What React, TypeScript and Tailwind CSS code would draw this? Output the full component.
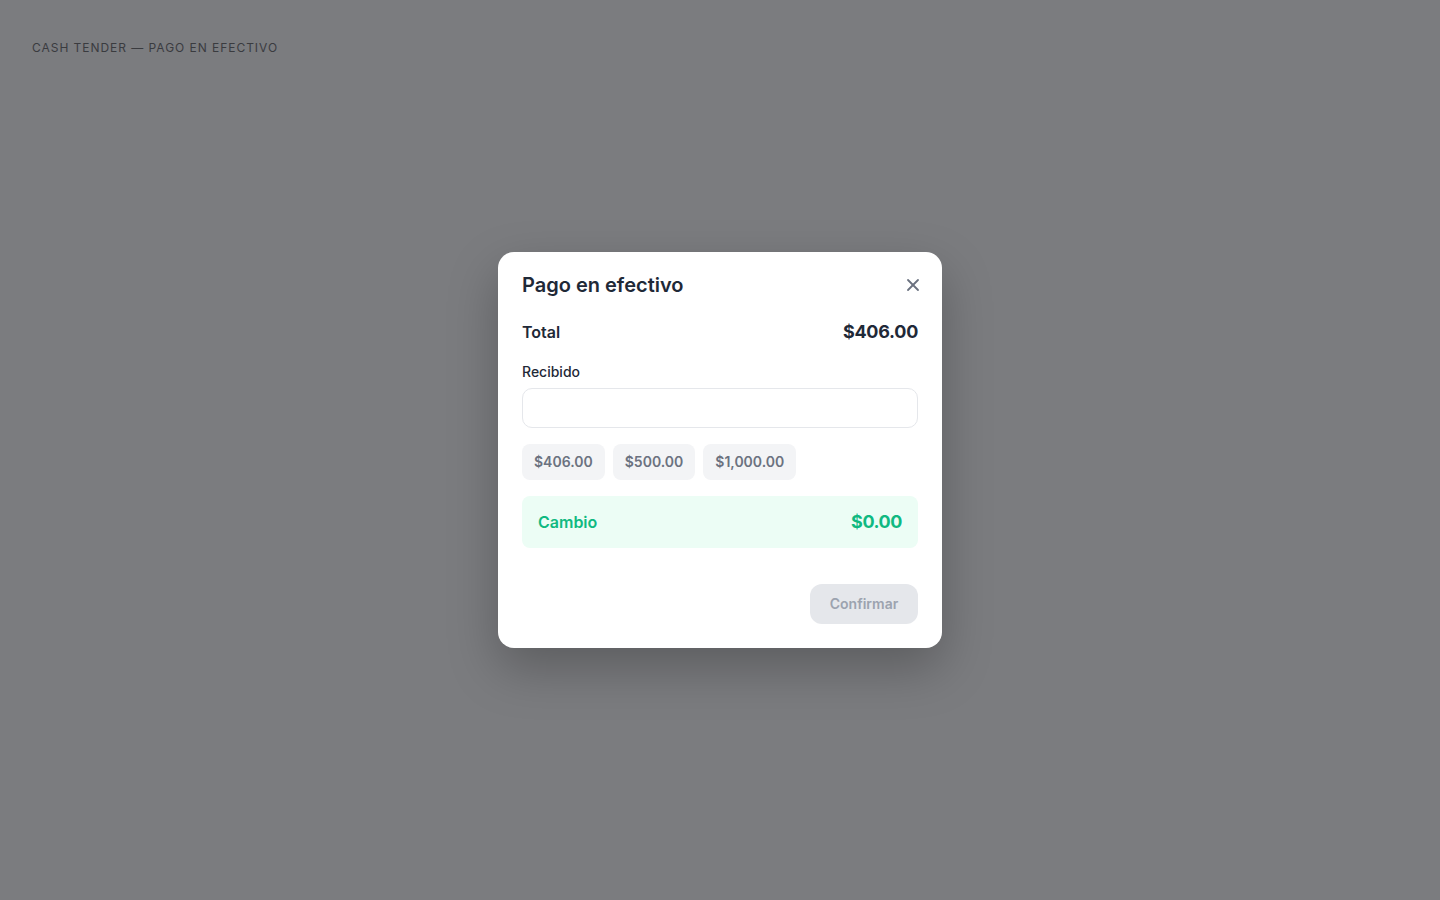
import React, { useState } from "react";
import { X } from "lucide-react";

const quickAmounts = ["$406.00", "$500.00", "$1,000.00"];

const App: React.FC = () => {
  const [received, setReceived] = useState<string>("");

  return (
    <div
      className="min-h-screen w-full bg-[#7b7c7f] relative"
      style={{ fontFamily: "Inter, 'Noto Sans', sans-serif" }}
    >
      {/* Page label */}
      <div className="px-8 pt-10 text-xs leading-4 tracking-[0.08em] uppercase text-[#3a3b3f]">
        Cash Tender — Pago en efectivo
      </div>

      {/* Modal overlay */}
      <div className="absolute inset-0 flex items-center justify-center">
        <div className="w-[444px] bg-white rounded-2xl shadow-[0_20px_50px_rgba(0,0,0,0.25)] px-6 pt-[21px] pb-6">
          {/* Header */}
          <div className="flex items-center justify-between">
            <h2 className="text-xl leading-6 font-semibold text-[#1f2937]">
              Pago en efectivo
            </h2>
            <button className="-mr-[5px] text-[#6b7280]">
              <X size={20} strokeWidth={2.2} />
            </button>
          </div>

          {/* Total */}
          <div className="mt-[21px] flex items-center justify-between">
            <span className="text-base leading-7 font-semibold text-[#1f2937]">
              Total
            </span>
            <span className="text-lg leading-7 font-bold tracking-[-0.015em] text-[#1f2937]">
              $406.00
            </span>
          </div>

          {/* Received input */}
          <label className="mt-4 block text-sm leading-5 font-medium text-[#1f2937]">
            Recibido
          </label>
          <input
            value={received}
            onChange={(e) => setReceived(e.target.value)}
            className="mt-1.5 block w-full h-10 rounded-[10px] border border-[#e5e7eb] px-3 text-sm outline-none"
          />

          {/* Quick amounts */}
          <div className="mt-4 flex gap-2">
            {quickAmounts.map((amount) => (
              <button
                key={amount}
                onClick={() => setReceived(amount)}
                className="h-9 px-3 rounded-lg bg-[#f3f4f6] text-sm font-semibold text-[#6b7280]"
              >
                {amount}
              </button>
            ))}
          </div>

          {/* Change */}
          <div className="mt-4 flex items-center justify-between rounded-lg bg-[#ecfdf5] px-4 py-3">
            <span className="text-base leading-7 font-semibold text-[#10b981]">
              Cambio
            </span>
            <span className="text-lg leading-7 font-bold tracking-[-0.025em] text-[#10b981]">
              $0.00
            </span>
          </div>

          {/* Footer */}
          <div className="mt-9 flex justify-end">
            <button
              disabled
              className="h-10 w-[108px] rounded-xl bg-[#e5e7eb] text-sm font-semibold text-[#9ca3af]"
            >
              Confirmar
            </button>
          </div>
        </div>
      </div>
    </div>
  );
};

export default App;
